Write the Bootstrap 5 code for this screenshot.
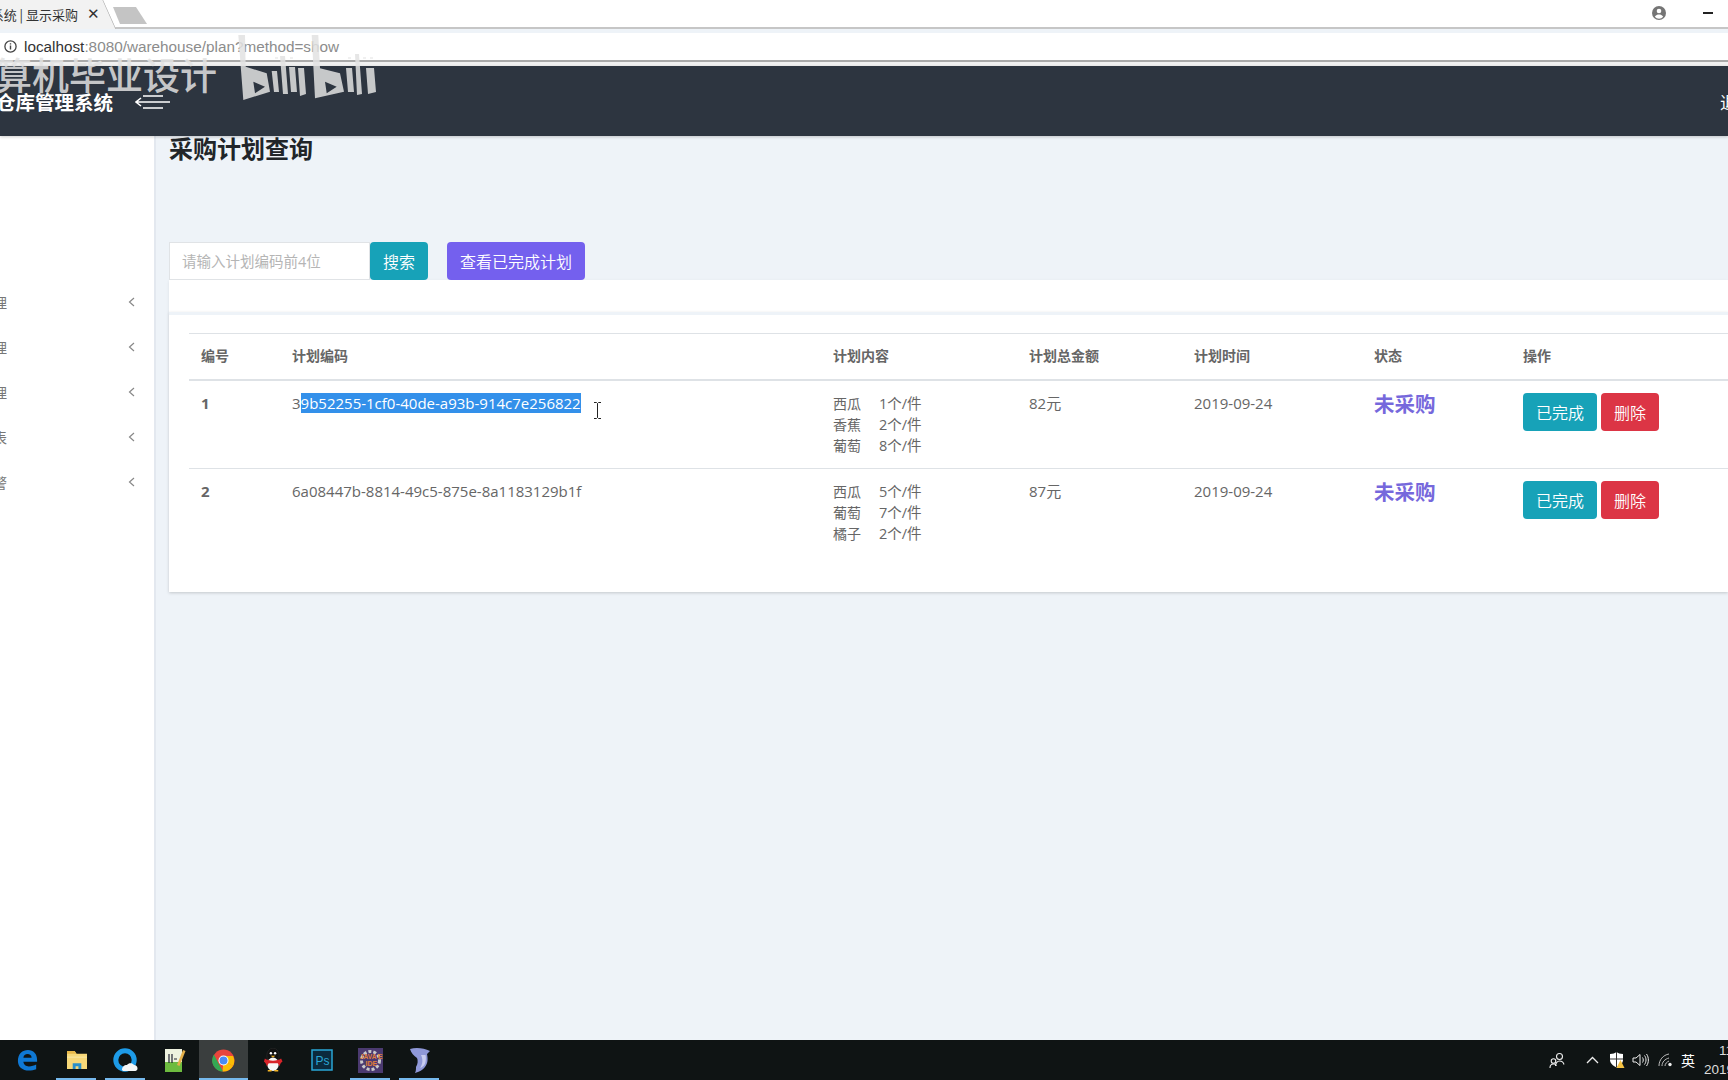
<!DOCTYPE html>
<html lang="zh"><head><meta charset="utf-8"><title>采购计划查询</title>
<link href="https://cdn.jsdelivr.net/npm/bootstrap@5.3.0/dist/css/bootstrap.min.css" rel="stylesheet">
<style>
html,body{height:100%;overflow:hidden}
body{font-family:"Open Sans","Noto Sans CJK SC",sans-serif;font-size:14px;color:#6c6c6c;background:#eef3f8;width:1728px;height:1080px;position:relative}
.shell{height:1080px}
.tabstrip{height:29px;background:#fff;border-bottom:2px solid #c6c6c6;flex:none}
.tabcur{width:116px;height:29px;background:#f2f2f2;overflow:hidden;white-space:nowrap;font-size:13px;color:#333;font-family:"Noto Sans CJK SC",sans-serif;clip-path:polygon(0 0,103px 0,116px 29px,0 29px);position:relative}
.tabcur::after{content:"";position:absolute;left:109px;top:-2px;width:1.5px;height:33px;background:#a8a8a8;transform:rotate(-24deg)}
.tabtext{width:78px;overflow:hidden;direction:rtl;text-align:right}
.tabclose{font-size:15px;margin-left:9px;font-family:"Liberation Sans",sans-serif;color:#333}
.tabnew{width:34px;height:17px;background:#c4c4c4;margin:7px 0 0 -3px;clip-path:polygon(0 0,23px 0,34px 17px,7px 17px)}
.winctrl{padding-top:6px}
.winmin{width:10px;height:1.5px;background:#222;margin:0 15px 0 37px}
.toolbar{height:29px;background:#fff;border-bottom:2px solid #a9a9a9;flex:none;margin-top:4px;font:15.3px "Liberation Sans",sans-serif;color:#8c8c8c}
.toolbar b{font-weight:400;color:#333}
.urlicon{margin-left:4px}
.urltext{margin-left:7px}
.gap-band{height:4px;background:#f0f0f0;flex:none}
.topnav{height:70px;background:#2d3540;flex:none;box-shadow:0 1px 3px rgba(0,0,0,.2);position:relative;z-index:2}
.brand{color:#fff;font:700 19.5px "Noto Sans CJK SC",sans-serif;width:113px;overflow:hidden;white-space:nowrap;direction:rtl;text-align:right}
.burger{margin-left:22px;margin-top:2px}
.logout{color:#fff;font:17px "Noto Sans CJK SC",sans-serif;width:8px;overflow:hidden;white-space:nowrap}
.side{width:156px;background:#fff;border-right:2px solid #e3e8ef;flex:none;padding-top:143px}
.sideitem{height:45px;color:#777;font:14px "Noto Sans CJK SC",sans-serif}
.sidetext{width:7px;overflow:hidden;direction:rtl;white-space:nowrap}
.chev{margin-right:19px}
.main{padding-left:13px;min-width:0}
.pagetitle{font:700 24px/1.2 "Noto Sans CJK SC",sans-serif;color:#212529;margin:-2px 0 0;height:108px}
.searchinput{width:201px;height:38px;border:1px solid #e0e3e6;border-radius:0;font-size:14.5px;padding:0 12px;background:#fff}
.searchinput::placeholder{color:#b5b5b5}
.btnx{height:38px;font:16px "Noto Sans CJK SC",sans-serif;font-weight:350;color:#fff;padding:0 13px;border:0;border-radius:4px;display:inline-flex;align-items:center;justify-content:center}
.btn-teal{background:#17a2b8;width:58px}
.btn-violet{background:#7460ee;width:138px;margin-left:19px}
.btn-done{background:#17a2b8;width:74px}
.btn-del{background:#dc3545;width:58px}
.band{height:33px;background:#fff;box-shadow:0 1px 3px rgba(0,0,0,.08)}
.panel{background:#fff;box-shadow:0 1px 3px rgba(0,0,0,.18);height:280px;margin-top:-1px;border-top:3px solid #eef3f8;padding:18px 0 0 20px;overflow:hidden;position:relative}
.plantable{width:1620px;table-layout:fixed;border-collapse:collapse;font-size:15px;color:#666;font-family:"Open Sans","Noto Sans CJK SC",sans-serif}
.plantable th{font:700 14px/1.5 "Noto Sans CJK SC",sans-serif;color:#666;padding:11px 12px 12px;height:46px;border-top:1px solid #dee2e6;border-bottom:2px solid #dee2e6}
.plantable td{padding:12px;vertical-align:top;height:88px;border-bottom:1px solid #dee2e6;line-height:21px}
.plantable tr:last-child td{border-bottom:0}
.plantable td.num{font-weight:700}
.fruit{display:block;white-space:nowrap;font-size:14.5px}
.fruit span{display:inline-block;width:46px;font-size:14px}
.state{font:700 20.5px/24px "Noto Sans CJK SC",sans-serif;color:#7668dc;margin-top:-2px}
.sel{background:#3390ea;color:#fff}
.cursor{position:absolute;left:424px;top:87px}
.taskbar{height:40px;background:#0f1414;flex:none;position:relative;z-index:3}
.tbstart{padding-left:3px}
.tbslot{width:49px;height:40px;position:relative}
.tbslot.open::after{content:"";position:absolute;left:4px;right:5px;bottom:0;height:2px;background:#76b9ed}
.tbslot.active{background:#3a3e3e}
.tbslot.active::after{left:0;right:0}
.tray{color:#fff;font:14px "Noto Sans CJK SC",sans-serif}
.people{margin-right:16px}
.m4{margin-left:4px}.m10{margin-left:10px}.m7{margin-left:7px}.m9{margin-left:9px}.m8{margin-left:8px}
.clock{width:24px;overflow:hidden;white-space:nowrap;font:13.5px/19px "Liberation Sans",sans-serif;color:#ddd;margin-left:9px}
.clocktime{padding-left:15px}
.mark1{position:absolute;left:-8px;top:52px;font:500 37px/1.2 "Noto Sans CJK SC",sans-serif;color:rgba(226,226,226,.85);z-index:5;white-space:nowrap;width:225px;overflow:hidden;direction:rtl;text-align:right}
.mark2{position:absolute;left:235px;top:34px;z-index:5}
</style></head><body>
<div class="shell d-flex flex-column">
 <div class="tabstrip d-flex align-items-start">
  <div class="tabcur d-flex align-items-center"><div class="tabtext">&#8206;系统 | 显示采购</div><div class="tabclose">✕</div></div>
  <div class="tabnew"></div>
  <div class="ms-auto d-flex align-items-center winctrl">
   <svg width="14" height="14" viewBox="0 0 14 14"><circle cx="7" cy="7" r="7" fill="#757575"/><circle cx="7" cy="5" r="2.3" fill="#fff"/><path d="M2.8 10.7c1-1.7 2.6-2.3 4.2-2.3s3.2.6 4.2 2.3A5.5 5.5 0 0 1 2.8 10.7z" fill="#fff"/></svg>
   <div class="winmin"></div>
  </div>
 </div>
 <div class="toolbar d-flex align-items-center">
  <svg class="urlicon" width="13" height="13" viewBox="0 0 13 13"><circle cx="6.500" cy="6.500" r="5.600" fill="none" stroke="#444" stroke-width="1.300"/><path d="M6.500 5.600v4M6.500 3.200v1.300" stroke="#444" stroke-width="1.400"/></svg>
  <span class="urltext"><b>localhost</b>:8080/warehouse/plan?method=show</span>
 </div>
 <div class="gap-band"></div>
 <nav class="topnav d-flex align-items-center">
  <div class="brand">仓库管理系统</div>
  <svg class="burger" width="36" height="14" viewBox="0 0 36 14"><path d="M8 1h20M1 7h34M8 13h20M6 3 1 7l5 4" fill="none" stroke="#fff" stroke-width="1.600"/></svg>
  <div class="logout ms-auto">退出</div>
 </nav>
 <div class="d-flex flex-grow-1 overflow-hidden">
  <aside class="side">
   <div class="sideitem d-flex align-items-center justify-content-between"><span class="sidetext">管理</span><svg class="chev" width="7" height="10" viewBox="0 0 7 10"><path d="M6 1 1.500 5 6 9" fill="none" stroke="#888" stroke-width="1.200"/></svg></div>
   <div class="sideitem d-flex align-items-center justify-content-between"><span class="sidetext">管理</span><svg class="chev" width="7" height="10" viewBox="0 0 7 10"><path d="M6 1 1.500 5 6 9" fill="none" stroke="#888" stroke-width="1.200"/></svg></div>
   <div class="sideitem d-flex align-items-center justify-content-between"><span class="sidetext">管理</span><svg class="chev" width="7" height="10" viewBox="0 0 7 10"><path d="M6 1 1.500 5 6 9" fill="none" stroke="#888" stroke-width="1.200"/></svg></div>
   <div class="sideitem d-flex align-items-center justify-content-between"><span class="sidetext">报表</span><svg class="chev" width="7" height="10" viewBox="0 0 7 10"><path d="M6 1 1.500 5 6 9" fill="none" stroke="#888" stroke-width="1.200"/></svg></div>
   <div class="sideitem d-flex align-items-center justify-content-between"><span class="sidetext">预警</span><svg class="chev" width="7" height="10" viewBox="0 0 7 10"><path d="M6 1 1.500 5 6 9" fill="none" stroke="#888" stroke-width="1.200"/></svg></div>
  </aside>
  <main class="main flex-grow-1">
   <h1 class="pagetitle">采购计划查询</h1>
   <form class="d-flex">
    <input class="searchinput" placeholder="请输入计划编码前4位">
    <button type="button" class="btnx btn-teal">搜索</button>
    <button type="button" class="btnx btn-violet">查看已完成计划</button>
   </form>
   <div class="band"></div>
   <div class="panel">
    <table class="plantable">
     <colgroup><col style="width:91px"><col style="width:541px"><col style="width:196px"><col style="width:165px"><col style="width:180px"><col style="width:149px"><col></colgroup>
     <thead><tr><th>编号</th><th>计划编码</th><th>计划内容</th><th>计划总金额</th><th>计划时间</th><th>状态</th><th>操作</th></tr></thead>
     <tbody>
      <tr><td class="num">1</td><td>3<span class="sel">9b52255-1cf0-40de-a93b-914c7e256822</span></td>
       <td><span class="fruit"><span>西瓜</span>1个/件</span><span class="fruit"><span>香蕉</span>2个/件</span><span class="fruit"><span>葡萄</span>8个/件</span></td>
       <td>82元</td><td>2019-09-24</td><td><div class="state">未采购</div></td>
       <td class="d-flex gap-1"><button class="btnx btn-done">已完成</button><button class="btnx btn-del">删除</button></td></tr>
      <tr><td class="num">2</td><td>6a08447b-8814-49c5-875e-8a1183129b1f</td>
       <td><span class="fruit"><span>西瓜</span>5个/件</span><span class="fruit"><span>葡萄</span>7个/件</span><span class="fruit"><span>橘子</span>2个/件</span></td>
       <td>87元</td><td>2019-09-24</td><td><div class="state">未采购</div></td>
       <td class="d-flex gap-1"><button class="btnx btn-done">已完成</button><button class="btnx btn-del">删除</button></td></tr>
     </tbody>
    </table>
    <svg class="cursor" width="9" height="17" viewBox="0 0 9 17"><path d="M1 .5h2.500L4.500 1.500 5.500 .5H8M4.500 1.500v14M1 16.500h2.500l1-1 1 1H8" fill="none" stroke="#222" stroke-width="1"/></svg>
   </div>
  </main>
 </div>
 <footer class="taskbar d-flex align-items-center">
  <div class="d-flex tbstart">
   <div class="tbslot d-flex align-items-center justify-content-center"><svg width="21" height="22" viewBox="0 0 23 24"><path d="M1 13C1 5 6 1 12 1c6 0 10 4 10 11v2H7c.3 3.500 3 5 6 5 3 0 6-1 8-2v5c-2.500 1-5 1.500-8 1.500C6 23.500 1 19.500 1 13zm6-3.500h9c0-2.500-2-4-4.500-4S7.300 7 7 9.500z" fill="#0f78d4"/></svg></div>
   <div class="tbslot open d-flex align-items-center justify-content-center"><svg width="22" height="20" viewBox="0 0 23 21"><path d="M1 1h8l2 3h11v16H1z" fill="#f7d878"/><path d="M1 1h8l2 3H1z" fill="#e9b949"/><path d="M1 7h21v1H1z" fill="#fbe9a9"/><path d="M7 20v-6h9v6h-3v-3h-3v3z" fill="#2a8fc9"/></svg></div>
   <div class="tbslot open d-flex align-items-center justify-content-center"><svg width="25" height="25" viewBox="0 0 25 25"><circle cx="12" cy="12" r="9.200" fill="none" stroke="#1d9be8" stroke-width="5"/><path d="M9 22c0-3 2-5 5-5 1.500-2.500 5.500-2.500 7 0 2 0 3.500 1.500 3.500 3.500 0 1-.5 2-2 2.500H10z" fill="#f4f6f7"/></svg></div>
   <div class="tbslot d-flex align-items-center justify-content-center"><svg width="22" height="25" viewBox="0 0 22 25"><path d="M1 1h17v23H1z" fill="#eef2df"/><path d="M1 14h17v10H1z" fill="#6dbb3f"/><path d="M5 6v9M8 6v9M10 11h3" stroke="#223" stroke-width="1.200"/><path d="M13 17 19 2l2.500 1-6 15z" fill="#e4b04a"/></svg></div>
   <div class="tbslot active open d-flex align-items-center justify-content-center"><svg width="23" height="23" viewBox="0 0 23 23"><circle cx="11.500" cy="11.500" r="11" fill="#e8453c"/><path d="M11.500 11.500 21 17a11 11 0 0 1-9.500 5.500 11 11 0 0 1-1-.05z" fill="#fbbc05"/><path d="M1.900 5.500 7 15.300l4 7.150A11 11 0 0 1 1.900 5.500z" fill="#34a853"/><path d="M11.500 7h9.500A11 11 0 0 1 21 17l-5.500-3z" fill="#fbbc05"/><circle cx="11.500" cy="11.500" r="5" fill="#fff"/><circle cx="11.500" cy="11.500" r="4" fill="#4a8af4"/></svg></div>
   <div class="tbslot d-flex align-items-center justify-content-center"><svg width="20" height="24" viewBox="0 0 21 25"><ellipse cx="10.500" cy="8" rx="6.500" ry="8" fill="#111" stroke="#333" stroke-width=".5"/><ellipse cx="10.500" cy="17" rx="6" ry="7" fill="#f7f7f7"/><path d="M2 11c4 3 13 3 17 0l1.500 3c-2 1-2.500 3-3 5l-2-3H6l-2 3c-.5-2-1.500-4-3-5z" fill="#d8242a"/><circle cx="8.300" cy="5.500" r="1.300" fill="#fff"/><circle cx="12.700" cy="5.500" r="1.300" fill="#fff"/><path d="M8 8h5l-2.500 1.800z" fill="#f5b524"/><path d="M5 24.500h4V23H5zM12 24.500h4V23h-4z" fill="#f5b524"/></svg></div>
   <div class="tbslot d-flex align-items-center justify-content-center"><svg width="22" height="22" viewBox="0 0 22 22"><rect x="1" y="1" width="20" height="20" fill="#0b2a3d" stroke="#2aa6d6" stroke-width="1.500"/><text x="4.500" y="16" font-size="12" font-family="Liberation Sans" fill="#2aa6d6">Ps</text></svg></div>
   <div class="tbslot open d-flex align-items-center justify-content-center"><svg width="25" height="25" viewBox="0 0 25 25"><rect width="25" height="25" fill="#4b3a70"/><circle cx="12.500" cy="12.500" r="9" fill="none" stroke="#c9c9c9" stroke-width="3" stroke-dasharray="3 2"/><text x="2" y="11" font-size="6.500" font-weight="700" font-family="Liberation Sans" fill="#e2803a">JAVA EE</text><text x="7.500" y="18" font-size="7" font-weight="700" font-family="Liberation Sans" fill="#e2803a">IDE</text></svg></div>
   <div class="tbslot open d-flex align-items-center justify-content-center"><svg width="22" height="27" viewBox="0 0 22 27"><path d="M1 2c6-2 14-1 20 2l-3 3c1 5 1 9-2 13-2 3-6 5-10 6 1-2 1-4 1-6 2-3 2-7 1-9C5 9 2 6 1 2z" fill="#8f98d8"/><path d="M12 8c2 4 2 9-1 13 3-1 5-3 5.500-6 .5-3 .5-5 0-7z" fill="#c9cdf0"/></svg></div>
  </div>
  <div class="tray ms-auto d-flex align-items-center">
   <svg class="people" width="17" height="17" viewBox="0 0 17 17"><circle cx="10.500" cy="4.500" r="3" fill="none" stroke="#eee" stroke-width="1.100"/><path d="M6.500 14c0-3 2-5 4-5s4 1.500 4.500 3.500" fill="none" stroke="#eee" stroke-width="1.100"/><circle cx="4.500" cy="9" r="2.300" fill="none" stroke="#eee" stroke-width="1.100"/><path d="M1 16c0-2.500 1.500-4 3.500-4s2.500.8 3 1.800" fill="none" stroke="#eee" stroke-width="1.100"/></svg>
   <svg class="m4" width="13" height="8" viewBox="0 0 13 8"><path d="M1 7 6.500 1.500 12 7" fill="none" stroke="#eee" stroke-width="1.300"/></svg>
   <svg class="m10" width="16" height="16" viewBox="0 0 16 16"><path d="M1 2c3 0 5-1 6.500-2 1.500 1 3.500 2 6.500 2v6c0 3-3 6-6.500 7.500C4 14 1 11 1 8z" fill="#fff"/><path d="M7.500 0v15.500M1 7h13" stroke="#333" stroke-width="1"/><path d="M11.500 8l4 8h-8z" fill="#f5c242"/></svg>
   <svg class="m7" width="17" height="14" viewBox="0 0 17 14"><path d="M1 5h3l4-3.500v11L4 9H1z" fill="none" stroke="#eee"/><path d="M10.500 4.500c1 1.500 1 3.500 0 5M12.500 2.500c2 2.500 2 6.500 0 9M14.500 1c2.500 3.500 2.500 8.500 0 12" fill="none" stroke="#eee"/></svg>
   <svg class="m9" width="15" height="14" viewBox="0 0 15 14"><path d="M1 13C1 7 5 2 11 1M4 13c0-4 3-7 7-8M7 13c0-2.500 2-4 4-5" fill="none" stroke="#bbb"/><circle cx="12" cy="11.500" r="1.700" fill="#eee"/></svg>
   <span class="m8">英</span>
   <div class="clock"><div class="clocktime">11:</div><div>2019/</div></div>
  </div>
 </footer>
</div>
<div class="mark1">计算机毕业设计</div>
<svg class="mark2" width="145" height="70" viewBox="0 0 145 70">
 <path fill="#e2e2e2" fill-opacity=".85" fill-rule="evenodd" d="M3.300 1H10L10.700 32.700 31.700 39.300 35 57.700 8.300 66zM18.300 47.700 20 59.300 30 52.700z"/>
 <path fill="#e2e2e2" fill-opacity=".85" d="M36.700 37H42L44 58H39zM45 22H50L53 60H48zM54 33H60L62 58H56zM63 34H69L71 60 65 62z"/>
 <path fill="#e2e2e2" fill-opacity=".85" fill-rule="evenodd" d="M76.700 1H83.300L85 34.300 105 39.300 109 57.700 80 64.300zM90 47.700 91.700 59.300 101.700 52.700z"/>
 <path fill="#e2e2e2" fill-opacity=".85" d="M111 34H117L119 58H113zM120 20H124L127 60 122 61zM131 34H139L141 58 133 60z"/>
 <path fill="#e2e2e2" fill-opacity=".5" d="M40 23h3v2h-3zM55 23h3v2h-3zM113 23h3v2h-3zM128 23h3v2h-3zM135 23h3v2h-3z"/>
</svg>
</body></html>
